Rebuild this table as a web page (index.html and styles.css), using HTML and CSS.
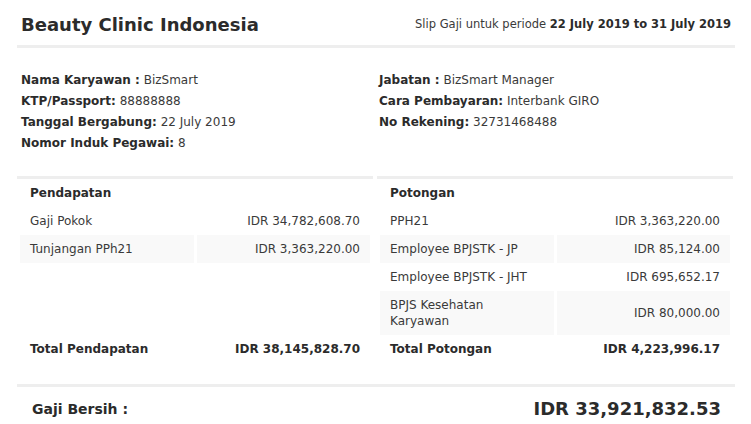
FILE: index.html
```html
<!DOCTYPE html>
<html lang="id">
<head>
    <meta charset="UTF-8">
    <title>Slip Gaji</title>
    <link rel="stylesheet" href="styles.css">
</head>
<body>
<div class="slip">
    <div class="slip-head">
        <h1 class="company">Beauty Clinic Indonesia</h1>
        <div class="period">Slip Gaji untuk periode <b>22 July 2019 to 31 July 2019</b></div>
    </div>

    <div class="info">
        <div class="info-col">
            <p><b>Nama Karyawan :</b> BizSmart</p>
            <p><b>KTP/Passport:</b> 88888888</p>
            <p><b>Tanggal Bergabung:</b> 22 July 2019</p>
            <p><b>Nomor Induk Pegawai:</b> 8</p>
        </div>
        <div class="info-col">
            <p><b>Jabatan :</b> BizSmart Manager</p>
            <p><b>Cara Pembayaran:</b> Interbank GIRO</p>
            <p><b>No Rekening:</b> 32731468488</p>
        </div>
    </div>

    <div class="lines">
        <table class="line-table">
            <thead>
                <tr><th colspan="2">Pendapatan</th></tr>
            </thead>
            <tbody>
                <tr><td>Gaji Pokok</td><td class="num">IDR 34,782,608.70</td></tr>
                <tr><td>Tunjangan PPh21</td><td class="num">IDR 3,363,220.00</td></tr>
            </tbody>
        </table>
        <table class="line-table">
            <thead>
                <tr><th colspan="2">Potongan</th></tr>
            </thead>
            <tbody>
                <tr><td>PPH21</td><td class="num">IDR 3,363,220.00</td></tr>
                <tr><td>Employee BPJSTK - JP</td><td class="num">IDR 85,124.00</td></tr>
                <tr><td>Employee BPJSTK - JHT</td><td class="num">IDR 695,652.17</td></tr>
                <tr><td>BPJS Kesehatan Karyawan</td><td class="num">IDR 80,000.00</td></tr>
            </tbody>
        </table>

        <table class="total-table">
            <tr><td>Total Pendapatan</td><td class="num">IDR 38,145,828.70</td></tr>
        </table>
        <table class="total-table">
            <tr><td>Total Potongan</td><td class="num">IDR 4,223,996.17</td></tr>
        </table>
    </div>

    <div class="net">
        <span class="net-label">Gaji Bersih :</span>
        <span class="net-value">IDR 33,921,832.53</span>
    </div>
</div>
</body>
</html>
```

FILE: styles.css
```css
*{margin: 0; padding: 0;}
body{
    font-family: "DejaVu Sans", Verdana, sans-serif;
    color: #3a3a3a;
    background: #fff;
}
b{
    color: #2b2b2b;
}
.slip{
    padding: 0 16px 0 17px;
}
.slip-head{
    display: flex;
    justify-content: space-between;
    align-items: center;
    height: 45px;
    padding: 0 4px;
    border-bottom: 3px solid #eeeeee;
}
.company{
    font-size: 18px;
    font-weight: bold;
    color: #2b2b2b;
    padding-top: 3px;
}
.period{
    font-size: 11.5px;
    padding-top: 3px;
}
.info{
    display: grid;
    grid-template-columns: 1fr 1fr;
    padding: 22px 4px 0 4px;
}
.info-col p{
    font-size: 12px;
    line-height: 21px;
}
.info-col + .info-col{
    padding-left: 3px;
}

/* pendapatan / potongan */
.lines{
    display: grid;
    grid-template-columns: 356px 356px;
    column-gap: 4px;
    align-items: start;
    margin-top: 22px;
}
.line-table,
.total-table{
    width: 100%;
    border-collapse: separate;
    border-spacing: 3px 0;
    font-size: 12px;
}
.line-table{
    border-top: 3px solid #eeeeee;
}
.line-table th{
    text-align: left;
    font-weight: bold;
    color: #2b2b2b;
    padding: 6px 10px;
    line-height: 16px;
}
.line-table td,
.total-table td{
    width: 50%;
    padding: 6px 10px;
    line-height: 16px;
    vertical-align: middle;
}
.line-table tbody tr:nth-child(even) td{
    background: #f9f9f9;
}
.total-table td{
    font-weight: bold;
    color: #2b2b2b;
}
.num{
    text-align: right;
}
.net{
    display: flex;
    justify-content: space-between;
    align-items: center;
    margin-top: 21px;
    border-top: 3px solid #eeeeee;
    padding: 11px 14px 0 15px;
    color: #2b2b2b;
    font-weight: bold;
}
.net-label{
    font-size: 14px;
}
.net-value{
    font-size: 18px;
}
```
